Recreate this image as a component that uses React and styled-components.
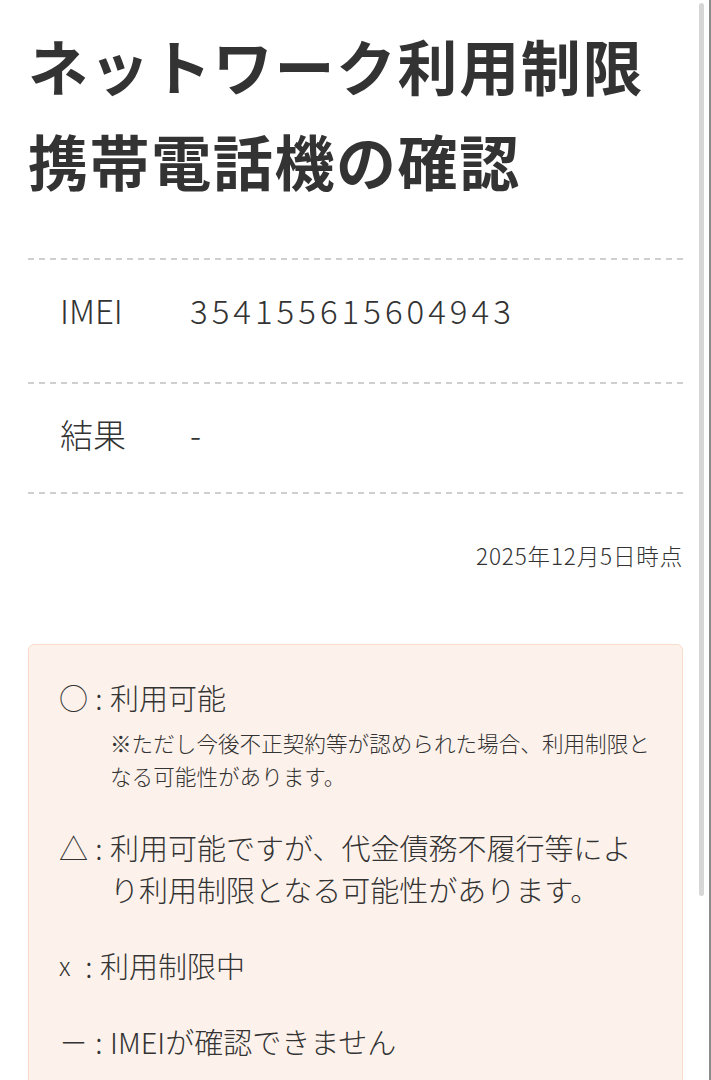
import { createGlobalStyle, styled } from 'styled-components';

const GlobalStyle = createGlobalStyle`
    html, body {
        margin: 0;
        padding: 0;
        background: #fff;
    }
    body {
        font-family: 'Noto Sans CJK JP', 'Noto Sans', sans-serif;
        font-weight: 300;
        color: #333;
        -webkit-font-smoothing: antialiased;
    }
`;

const Page = styled.div`
    padding: 17px 28px 40px;
`;

const Title = styled.h1`
    margin: 0;
    font-size: 60px;
    font-weight: 700;
    line-height: 95px;
    letter-spacing: 1.6px;
`;

const Divider = styled.div`
    height: 1.5px;
    background-image: repeating-linear-gradient(90deg, #cfcfcf 0 6px, transparent 6px 11px);
`;

const InfoList = styled.div`
    margin-top: 51px;
`;

const InfoRow = styled.div`
    display: flex;
    align-items: center;
    padding: 30px 0 ${(p) => (p.$tall ? '52.5px' : '38.5px')} 32px;
    font-size: 33px;
    line-height: 40px;
`;

const InfoLabel = styled.div`
    width: 130px;
    flex-shrink: 0;
`;

const InfoValue = styled.div`
    letter-spacing: ${(p) => (p.$digits ? '4px' : '0')};
`;

const DateNote = styled.p`
    margin: 46px 0 0;
    text-align: right;
    font-size: 22.5px;
    line-height: 30px;
    letter-spacing: 0.85px;
`;

const LegendCard = styled.div`
    margin-top: 74px;
    padding: 31px 30px 40px;
    background: #fdf2eb;
    border: 1px solid #f8dccb;
    border-radius: 6px;
    display: flex;
    flex-direction: column;
    gap: 34px;
`;

const LegendItem = styled.div`
    display: flex;
    font-size: 29px;
    line-height: 42px;
`;

const Symbol = styled.span`
    flex-shrink: 0;
    width: ${(p) => (p.$narrow ? '19px' : '29px')};
    font-size: ${(p) => (p.$narrow ? '25px' : '29px')};
`;

const Colon = styled.span`
    flex-shrink: 0;
    width: 22px;
    text-align: center;
`;

const LegendBody = styled.div`
    flex: 1;
    min-width: 0;
`;

const LegendNote = styled.p`
    margin: 8px 0 0;
    font-size: 21.6px;
    line-height: 33px;
`;

const ScrollTrack = styled.div`
    position: fixed;
    top: 0;
    right: 0;
    width: 2px;
    height: 100vh;
    background: #8c8c8c;
`;

const ScrollThumb = styled.div`
    position: fixed;
    top: 3px;
    right: 7px;
    width: 5px;
    height: 893px;
    border-radius: 3px;
    background: #d6d6d6;
`;

const legend = [
    { mark: '○', text: '利用可能', note: '※ただし今後不正契約等が認められた場合、利用制限となる可能性があります。' },
    { mark: '△', text: '利用可能ですが、代金債務不履行等により利用制限となる可能性があります。' },
    { mark: 'x', narrow: true, text: '利用制限中' },
    { mark: '－', text: 'IMEIが確認できません' },
];

function App() {
    return (
        <>
            <GlobalStyle />
            <Page>
                <Title>
                    ネットワーク利用制限
                    <br />
                    携帯電話機の確認
                </Title>

                <InfoList>
                    <Divider />
                    <InfoRow $tall>
                        <InfoLabel>IMEI</InfoLabel>
                        <InfoValue $digits>354155615604943</InfoValue>
                    </InfoRow>
                    <Divider />
                    <InfoRow>
                        <InfoLabel>結果</InfoLabel>
                        <InfoValue>-</InfoValue>
                    </InfoRow>
                    <Divider />
                </InfoList>

                <DateNote>2025年12月5日時点</DateNote>

                <LegendCard>
                    {legend.map((item) => (
                        <LegendItem key={item.mark}>
                            <Symbol $narrow={item.narrow}>{item.mark}</Symbol>
                            <Colon>:</Colon>
                            <LegendBody>
                                {item.text}
                                {item.note && <LegendNote>{item.note}</LegendNote>}
                            </LegendBody>
                        </LegendItem>
                    ))}
                </LegendCard>
            </Page>
            <ScrollThumb />
            <ScrollTrack />
        </>
    );
}

export default App;
